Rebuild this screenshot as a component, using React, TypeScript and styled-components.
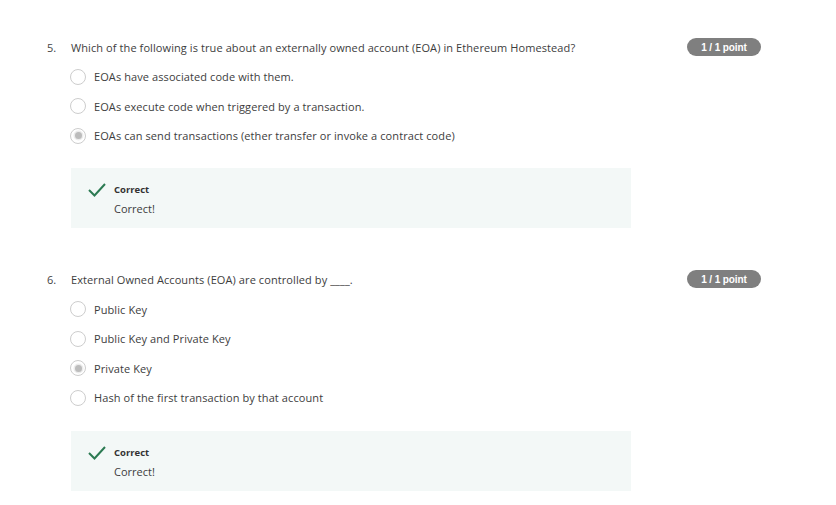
import React from "react";
import styled, { createGlobalStyle } from "styled-components";

const Global = createGlobalStyle`
  html, body { margin: 0; padding: 0; background: #fff; }
  body { font-family: "Open Sans", "Noto Sans", sans-serif; color: #3d3d3d; }
`;

const Page = styled.div`
  width: 836px;
  padding: 38px 0 0 47px;
  box-sizing: border-box;
  display: flex;
  flex-direction: column;
`;

const Question = styled.section<{ $gap?: number }>`
  display: flex;
  flex-direction: column;
  width: 714px;
  margin-bottom: ${(p) => p.$gap ?? 0}px;
`;

const Header = styled.div`
  display: flex;
  align-items: center;
  height: 18px;
`;

const Num = styled.span`
  width: 24px;
  font-size: 11px;
  color: #444;
`;

const Title = styled.span`
  flex: 1;
  font-size: 11px;
  letter-spacing: 0.09px;
  color: #3d3d3d;
`;

const Badge = styled.span`
  display: inline-flex;
  align-items: center;
  justify-content: center;
  width: 74px;
  height: 18px;
  border-radius: 9px;
  background: #7f7f7f;
  color: #fff;
  font-family: "Liberation Sans", Arial, sans-serif;
  font-weight: 700;
  font-size: 10px;
  letter-spacing: -0.1px;
`;

const Options = styled.div`
  display: flex;
  flex-direction: column;
  margin: 6px 0 0 23px;
`;

const Option = styled.label`
  display: flex;
  align-items: center;
  height: 29.6px;
  font-size: 11px;
  letter-spacing: 0.09px;
  color: #3d3d3d;
`;

const Radio = styled.span<{ $checked?: boolean }>`
  width: 16px;
  height: 16px;
  box-sizing: border-box;
  border-radius: 50%;
  border: 1.5px solid #cdcdcd;
  margin-right: 8px;
  display: flex;
  align-items: center;
  justify-content: center;
  &::after {
    content: "";
    display: ${(p) => (p.$checked ? "block" : "none")};
    width: 7px;
    height: 7px;
    border-radius: 50%;
    background: #bcbcbc;
    box-shadow: 0 0 0 1.5px #ececec;
  }
`;

const Feedback = styled.div<{ $top: number }>`
  margin: ${(p) => p.$top}px 0 0 24px;
  width: 560px;
  height: 60px;
  box-sizing: border-box;
  background: #f3f8f7;
  display: flex;
  align-items: flex-start;
  padding: 14px 0 0 17px;
`;

const Check = styled.svg`
  width: 18px;
  height: 16px;
  margin-right: 8px;
  flex: none;
`;

const FbText = styled.div`
  display: flex;
  flex-direction: column;
  padding-top: 1px;
`;

const FbLabel = styled.span`
  font-size: 9.5px;
  font-weight: 700;
  color: #333;
  line-height: 14px;
`;

const FbBody = styled.span`
  font-size: 11px;
  color: #3d3d3d;
  line-height: 16px;
  margin-top: 4px;
`;

type Q = {
  n: number;
  title: string;
  options: string[];
  checked: number;
};

const questions: Q[] = [
  {
    n: 5,
    title:
      "Which of the following is true about an externally owned account (EOA) in Ethereum Homestead?",
    options: [
      "EOAs have associated code with them.",
      "EOAs execute code when triggered by a transaction.",
      "EOAs can send transactions (ether transfer or invoke a contract code)",
    ],
    checked: 2,
  },
  {
    n: 6,
    title: "External Owned Accounts (EOA) are controlled by ____.",
    options: [
      "Public Key",
      "Public Key and Private Key",
      "Private Key",
      "Hash of the first transaction by that account",
    ],
    checked: 2,
  },
];

export default function App() {
  return (
    <Page>
      <Global />
      {questions.map((q, qi) => (
        <Question key={q.n} $gap={qi === 0 ? 42 : 0}>
          <Header>
            <Num>{q.n}.</Num>
            <Title>{q.title}</Title>
            <Badge>1 / 1 point</Badge>
          </Header>
          <Options>
            {q.options.map((o, i) => (
              <Option key={o}>
                <Radio $checked={i === q.checked} />
                {o}
              </Option>
            ))}
          </Options>
          <Feedback $top={qi === 0 ? 17.5 : 18}>
            <Check viewBox="0 0 18 16">
              <polyline
                points="1,8 6.5,13.5 17,2"
                fill="none"
                stroke="#2b7a52"
                strokeWidth="2"
              />
            </Check>
            <FbText>
              <FbLabel>Correct</FbLabel>
              <FbBody>Correct!</FbBody>
            </FbText>
          </Feedback>
        </Question>
      ))}
    </Page>
  );
}
